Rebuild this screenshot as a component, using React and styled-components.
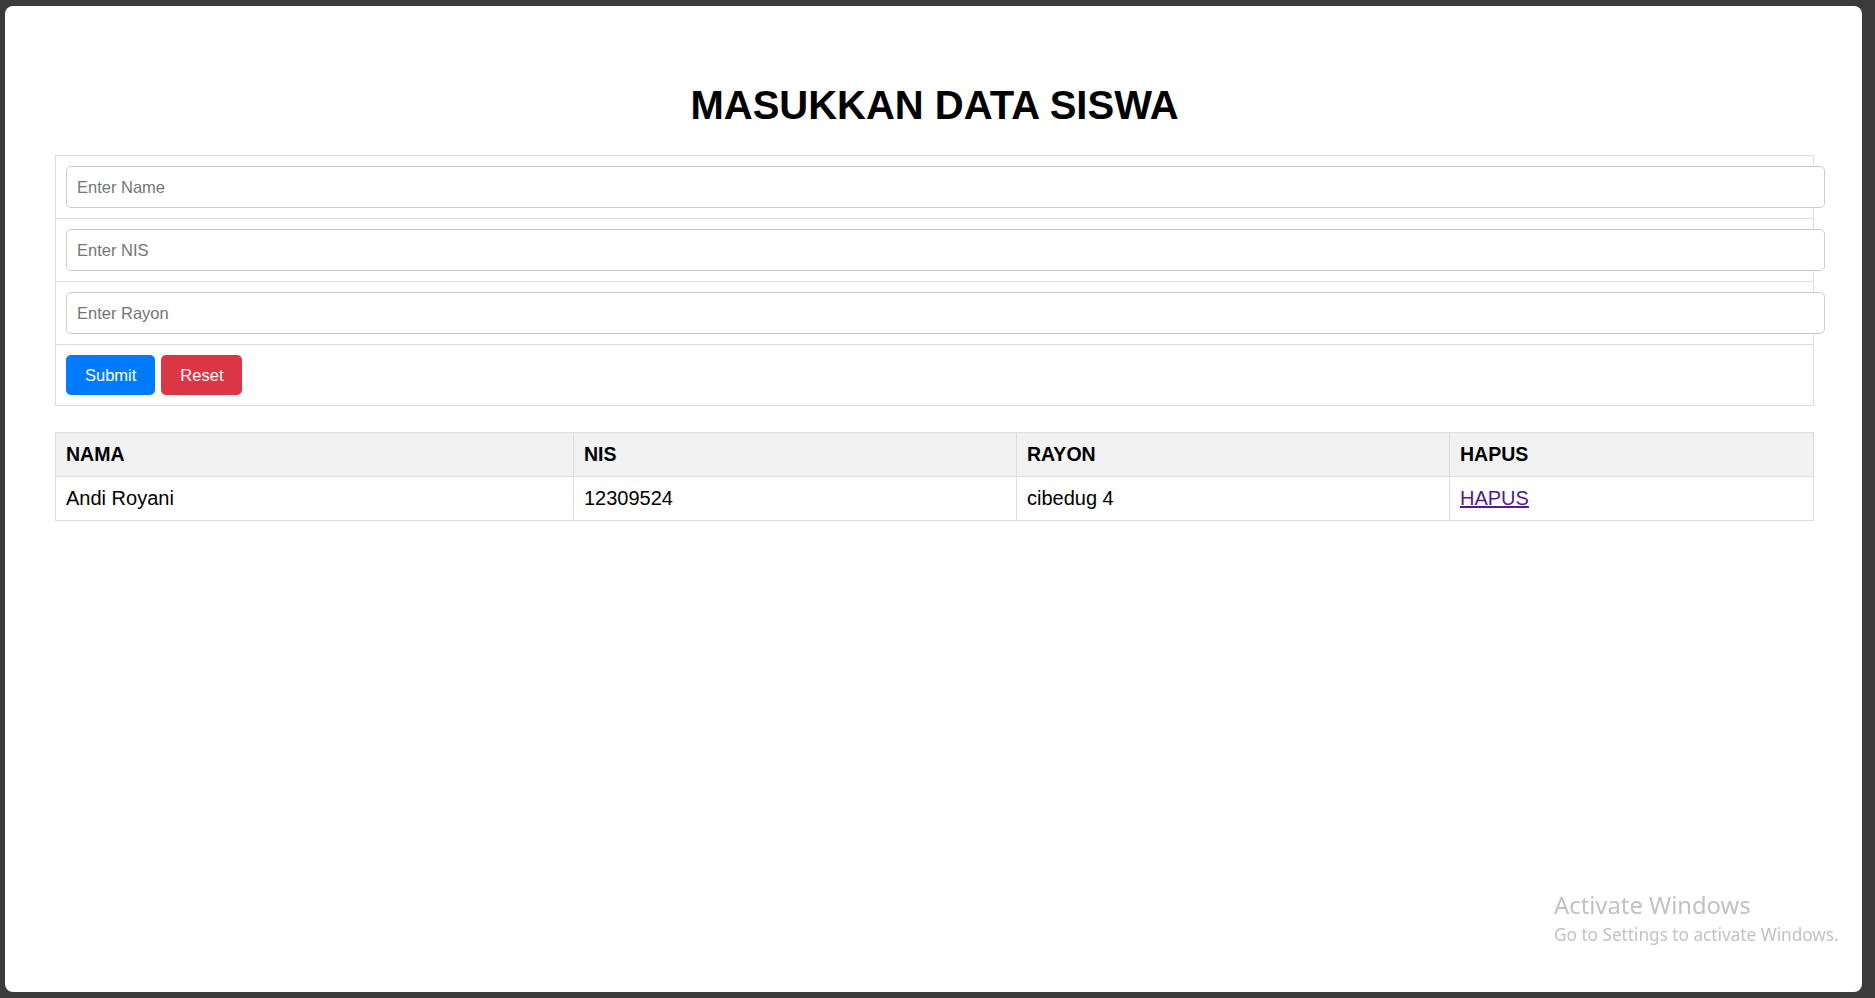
import React, { useState } from 'react';
import styled, { createGlobalStyle } from 'styled-components';

const GlobalStyle = createGlobalStyle`
  html, body {
    margin: 0;
    padding: 0;
    background: #3b3b3b;
  }
  * {
    font-family: "Liberation Sans", Arial, sans-serif;
  }
`;

const Window = styled.div`
  margin: 6px 13px 6px 5px;
  min-height: 986px;
  box-sizing: border-box;
  padding: 76px 48px 0 50px;
  background: #ffffff;
  border-radius: 8px;
`;

const Title = styled.h1`
  margin: 0 0 27px;
  text-align: center;
  font-size: 40px;
  line-height: 46px;
  font-weight: bold;
  color: #000;
`;

const FormBox = styled.form`
  border: 1px solid #ddd;
  margin: 0;
`;

const FormRow = styled.div`
  padding: 10px;
  border-top: ${(p) => (p.$first ? 'none' : '1px solid #ddd')};
  display: ${(p) => (p.$buttons ? 'flex' : 'block')};
  gap: 6px;
`;

const Input = styled.input`
  display: block;
  box-sizing: content-box;
  width: 100%;
  height: 20px;
  padding: 10px;
  margin: 0;
  border: 1px solid #ccc;
  border-radius: 5px;
  background: #fff;
  font-size: 16.5px;
  color: #222;
  outline: none;

  &::placeholder {
    color: #757575;
  }
`;

const Button = styled.button`
  height: 40px;
  padding: 0 19px;
  border: none;
  border-radius: 5px;
  background: ${(p) => p.$bg};
  color: #fff;
  font-size: 16.5px;
  cursor: pointer;
`;

const DataTable = styled.table`
  width: 100%;
  margin-top: 26px;
  border-collapse: collapse;
  table-layout: fixed;
`;

const Th = styled.th`
  width: ${(p) => p.$w || 'auto'};
  background: #f2f2f2;
  border: 1px solid #ddd;
  padding: 10px;
  line-height: 23px;
  font-size: 19.5px;
  font-weight: bold;
  text-align: left;
  color: #000;
`;

const Td = styled.td`
  border: 1px solid #ddd;
  padding: 10px;
  line-height: 23px;
  font-size: 20px;
  color: #000;
`;

const DeleteLink = styled.a`
  color: #551a8b;
  text-decoration: underline;
  cursor: pointer;
`;

const Watermark = styled.div`
  position: fixed;
  left: 1554px;
  top: 887px;
  color: #c2c2c2;
  pointer-events: none;

  & > div {
    font-family: "Noto Sans", "Open Sans", sans-serif;
  }
`;

const WmTitle = styled.div`
  font-size: 23.8px;
  line-height: 37px;
`;

const WmSub = styled.div`
  font-size: 17.2px;
  line-height: 22px;
`;

export default function App() {
  const [rows, setRows] = useState([
    { nama: 'Andi Royani', nis: '12309524', rayon: 'cibedug 4' },
  ]);
  const [form, setForm] = useState({ nama: '', nis: '', rayon: '' });

  const submit = (e) => {
    e.preventDefault();
    if (!form.nama) return;
    setRows([...rows, form]);
    setForm({ nama: '', nis: '', rayon: '' });
  };

  return (
    <>
      <GlobalStyle />
      <Window>
        <Title>MASUKKAN DATA SISWA</Title>
        <FormBox onSubmit={submit} onReset={() => setForm({ nama: '', nis: '', rayon: '' })}>
          <FormRow $first>
            <Input
              placeholder="Enter Name"
              value={form.nama}
              onChange={(e) => setForm({ ...form, nama: e.target.value })}
            />
          </FormRow>
          <FormRow>
            <Input
              placeholder="Enter NIS"
              value={form.nis}
              onChange={(e) => setForm({ ...form, nis: e.target.value })}
            />
          </FormRow>
          <FormRow>
            <Input
              placeholder="Enter Rayon"
              value={form.rayon}
              onChange={(e) => setForm({ ...form, rayon: e.target.value })}
            />
          </FormRow>
          <FormRow $buttons>
            <Button type="submit" $bg="#007bff">Submit</Button>
            <Button type="reset" $bg="#dc3545">Reset</Button>
          </FormRow>
        </FormBox>

        <DataTable>
          <thead>
            <tr>
              <Th $w="497px">NAMA</Th>
              <Th $w="422px">NIS</Th>
              <Th $w="412px">RAYON</Th>
              <Th>HAPUS</Th>
            </tr>
          </thead>
          <tbody>
            {rows.map((r, i) => (
              <tr key={i}>
                <Td>{r.nama}</Td>
                <Td>{r.nis}</Td>
                <Td>{r.rayon}</Td>
                <Td>
                  <DeleteLink href="#" onClick={(e) => { e.preventDefault(); setRows(rows.filter((_, j) => j !== i)); }}>
                    HAPUS
                  </DeleteLink>
                </Td>
              </tr>
            ))}
          </tbody>
        </DataTable>
      </Window>
      <Watermark>
        <WmTitle>Activate Windows</WmTitle>
        <WmSub>Go to Settings to activate Windows.</WmSub>
      </Watermark>
    </>
  );
}
